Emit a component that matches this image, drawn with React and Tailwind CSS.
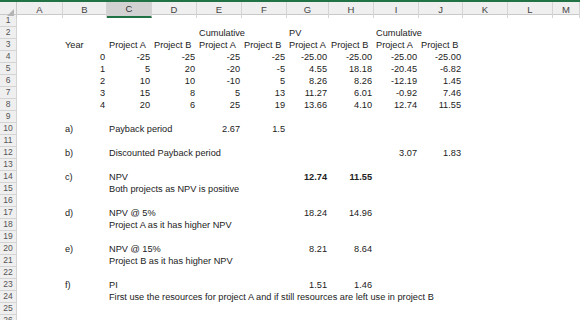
import React from 'react';

const letters = ['A', 'B', 'C', 'D', 'E', 'F', 'G', 'H', 'I', 'J', 'K', 'L', 'M'];

// numbers go right aligned, text left aligned, objects can be bold
const data = {
  2: { E: 'Cumulative', G: 'PV', I: 'Cumulative' },
  3: {
    B: 'Year', C: 'Project A', D: 'Project B', E: 'Project A', F: 'Project B',
    G: 'Project A', H: 'Project B', I: 'Project A', J: 'Project B',
  },
  4: { B: 0, C: -25, D: -25, E: -25, F: -25, G: '-25.00', H: '-25.00', I: '-25.00', J: '-25.00' },
  5: { B: 1, C: 5, D: 20, E: -20, F: -5, G: '4.55', H: '18.18', I: '-20.45', J: '-6.82' },
  6: { B: 2, C: 10, D: 10, E: -10, F: 5, G: '8.26', H: '8.26', I: '-12.19', J: '1.45' },
  7: { B: 3, C: 15, D: 8, E: 5, F: 13, G: '11.27', H: '6.01', I: '-0.92', J: '7.46' },
  8: { B: 4, C: 20, D: 6, E: 25, F: 19, G: '13.66', H: '4.10', I: '12.74', J: '11.55' },
  10: { B: 'a)', C: 'Payback period', E: 2.67, F: 1.5 },
  12: { B: 'b)', C: 'Discounted Payback period', I: 3.07, J: 1.83 },
  14: { B: 'c)', C: 'NPV', G: { v: '12.74', bold: true }, H: { v: '11.55', bold: true } },
  15: { C: 'Both projects as NPV is positive' },
  17: { B: 'd)', C: 'NPV @ 5%', G: 18.24, H: 14.96 },
  18: { C: 'Project A as it has higher NPV' },
  20: { B: 'e)', C: 'NPV @ 15%', G: 8.21, H: 8.64 },
  21: { C: 'Project B as it has higher NPV' },
  23: { B: 'f)', C: 'PI', G: 1.51, H: 1.46 },
  24: { C: 'First use the resources for project A and if still resources are left use in project B' },
};

const isNum = (v) => typeof v === 'number' || /^-?[\d.]+$/.test(v);

function Cell({ value }) {
  if (value === undefined) return <div className="h-[12px]" />;
  const cell = typeof value === 'object' ? value : { v: value };
  const num = isNum(cell.v);
  return (
    <div
      className={`h-[12px] leading-[12px] whitespace-nowrap ${
        num ? 'text-right pr-[2px] overflow-hidden' : 'text-left pl-[2px] overflow-visible'
      } ${cell.bold ? 'font-bold' : ''}`}
    >
      {cell.v}
    </div>
  );
}

export default function App() {
  const rows = Array.from({ length: 26 }, (_, i) => i + 1);
  const grid = 'grid grid-cols-[17px_46px_44px_45px_45px_45px_45px_42px_45px_45px_44px_45px_45px_1fr]';

  return (
    <div className="w-[580px] h-[320px] overflow-hidden bg-white text-[#222] text-[9.2px] font-['Liberation_Sans',Arial,sans-serif]">
      <div className="h-[2px] bg-[#217346]" />

      <div className={`${grid} h-[13px] bg-[#efefef] border-b border-[#c9c9c9] text-[#444] text-[9.5px]`}>
        <div className="relative border-r border-[#c9c9c9]">
          <svg className="absolute right-[2px] bottom-[2px]" width="7" height="7" viewBox="0 0 7 7">
            <polygon points="7,0 7,7 0,7" fill="#b4b4b4" />
          </svg>
        </div>
        {letters.map((l) => (
          <div
            key={l}
            className={`flex items-center justify-center border-r border-[#d4d4d4] ${
              l === 'C' ? 'bg-[#d2d2d2] border-b-2 border-b-[#217346] text-[#333]' : ''
            }`}
          >
            {l}
          </div>
        ))}
      </div>

      {rows.map((r) => (
        <div key={r} className={grid}>
          <div className="h-[12px] leading-[11px] text-center text-[8.5px] text-[#555] bg-[#efefef] border-r border-b border-[#d4d4d4]">
            {r}
          </div>
          {letters.map((l) => (
            <Cell key={l} value={data[r] ? data[r][l] : undefined} />
          ))}
        </div>
      ))}
    </div>
  );
}
